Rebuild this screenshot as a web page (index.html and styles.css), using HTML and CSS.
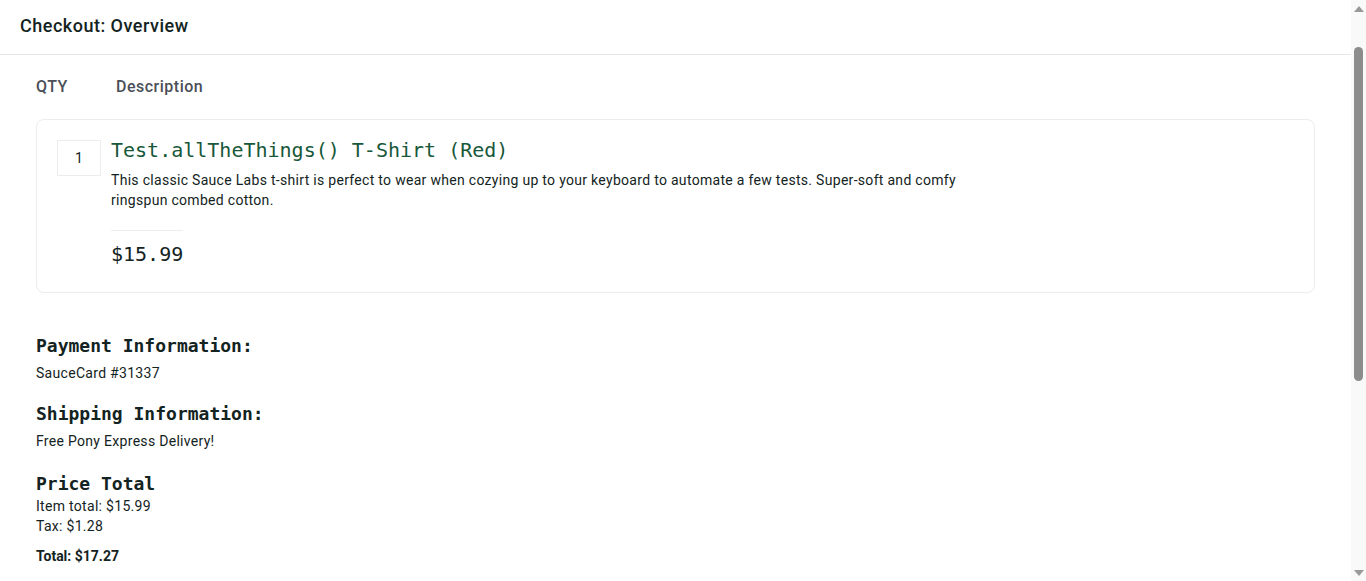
FILE: index.html
```html
<!DOCTYPE html>
<html lang="en">
<head>
<meta charset="utf-8">
<title>Swag Labs</title>
<link rel="stylesheet" href="styles.css">
</head>
<body>
<div class="window">
  <div class="page">
    <div class="secondary-header">
      <span class="title">Checkout: Overview</span>
    </div>
    <main class="content">
      <div class="cart-labels">
        <div class="qty-label">QTY</div>
        <div class="desc-label">Description</div>
      </div>
      <div class="cart-item">
        <div class="qty">1</div>
        <div class="item-body">
          <div class="item-name">Test.allTheThings() T-Shirt (Red)</div>
          <div class="item-desc">This classic Sauce Labs t-shirt is perfect to wear when cozying up to your keyboard to automate a few tests. Super-soft and comfy ringspun combed cotton.</div>
          <div class="item-price">$15.99</div>
        </div>
      </div>
      <div class="summary">
        <div class="summary-label">Payment Information:</div>
        <div class="summary-value">SauceCard #31337</div>
        <div class="summary-label">Shipping Information:</div>
        <div class="summary-value">Free Pony Express Delivery!</div>
        <div class="summary-label total-label">Price Total</div>
        <div class="summary-line">Item total: $15.99</div>
        <div class="summary-line">Tax: $1.28</div>
        <div class="summary-total">Total: $17.27</div>
      </div>
    </main>
  </div>
  <div class="scrollbar" aria-hidden="true">
    <div class="sb-btn"><span class="sb-tri sb-up"></span></div>
    <div class="sb-track"><div class="sb-thumb"></div></div>
    <div class="sb-btn"><span class="sb-tri sb-down"></span></div>
  </div>
</div>
</body>
</html>
```
FILE: styles.css
```css
html, body {
  margin: 0;
  padding: 0;
  background: #ffffff;
  overflow: hidden;
}
body {
  font-family: Roboto, "Noto Sans", sans-serif;
  color: #132322;
}
.window {
  display: flex;
  height: 100vh;
}
.page {
  flex: 1;
  min-width: 0;
  display: flex;
  flex-direction: column;
}
.secondary-header {
  height: 55px;
  box-sizing: border-box;
  border-bottom: 1px solid #e6e6e6;
  padding: 16px 20px 0;
}
.title {
  font-size: 18px;
  line-height: 20px;
  font-weight: 500;
  letter-spacing: 0.5px;
  color: #132322;
}
.content {
  padding: 22px 36px 0;
}
.cart-labels {
  display: flex;
  font-size: 16px;
  line-height: 20px;
  font-weight: 500;
  letter-spacing: 0.5px;
  color: #4b4f57;
}
.qty-label {
  width: 80px;
}
.cart-item {
  margin-top: 22px;
  border: 1px solid #ededed;
  border-radius: 8px;
  padding: 20px 20px 26px;
  display: flex;
  align-items: flex-start;
  gap: 10px;
}
.qty {
  width: 44px;
  height: 36px;
  box-sizing: border-box;
  border: 1px solid #ededed;
  display: flex;
  align-items: center;
  justify-content: center;
  font-size: 14px;
  color: #132322;
}
.item-body {
  display: flex;
  flex-direction: column;
  align-items: flex-start;
}
.item-name {
  font-family: "DejaVu Sans Mono", monospace;
  font-size: 20px;
  line-height: 24px;
  color: #18583a;
  margin-top: -2px;
}
.item-desc {
  margin-top: 8px;
  font-size: 14px;
  line-height: 20px;
  letter-spacing: 0.3px;
  max-width: 870px;
  color: #132322;
}
.item-price {
  margin-top: 20px;
  border-top: 1px solid #ededed;
  padding-top: 11px;
  font-family: "DejaVu Sans Mono", monospace;
  font-size: 20px;
  line-height: 24px;
  color: #132322;
}
.summary {
  margin-top: 41px;
  display: flex;
  flex-direction: column;
  align-items: flex-start;
}
.summary-label {
  font-family: "DejaVu Sans Mono", monospace;
  font-weight: bold;
  font-size: 18px;
  line-height: 24px;
  color: #132322;
}
.total-label {
  margin-top: 2px;
}
.summary-value {
  margin: 5px 0 19px;
  font-size: 14px;
  line-height: 20px;
  letter-spacing: 0.3px;
}
.summary-line {
  font-size: 14px;
  line-height: 20px;
  letter-spacing: 0.3px;
}
.summary-total {
  margin-top: 10px;
  font-size: 14px;
  line-height: 20px;
  font-weight: bold;
}
.scrollbar {
  width: 15px;
  flex: none;
  background: #f9f9f9;
  display: flex;
  flex-direction: column;
}
.sb-btn {
  height: 17px;
  flex: none;
  display: flex;
  align-items: center;
  justify-content: center;
}
.sb-tri {
  display: block;
  width: 0;
  height: 0;
  border-left: 5px solid transparent;
  border-right: 5px solid transparent;
}
.sb-up {
  border-bottom: 6px solid #999999;
}
.sb-down {
  border-top: 6px solid #999999;
}
.sb-track {
  flex: 1;
  display: flex;
  justify-content: center;
  padding-top: 30px;
}
.sb-thumb {
  width: 9px;
  height: 334px;
  border-radius: 5px;
  background: #8c8c8c;
}
```
